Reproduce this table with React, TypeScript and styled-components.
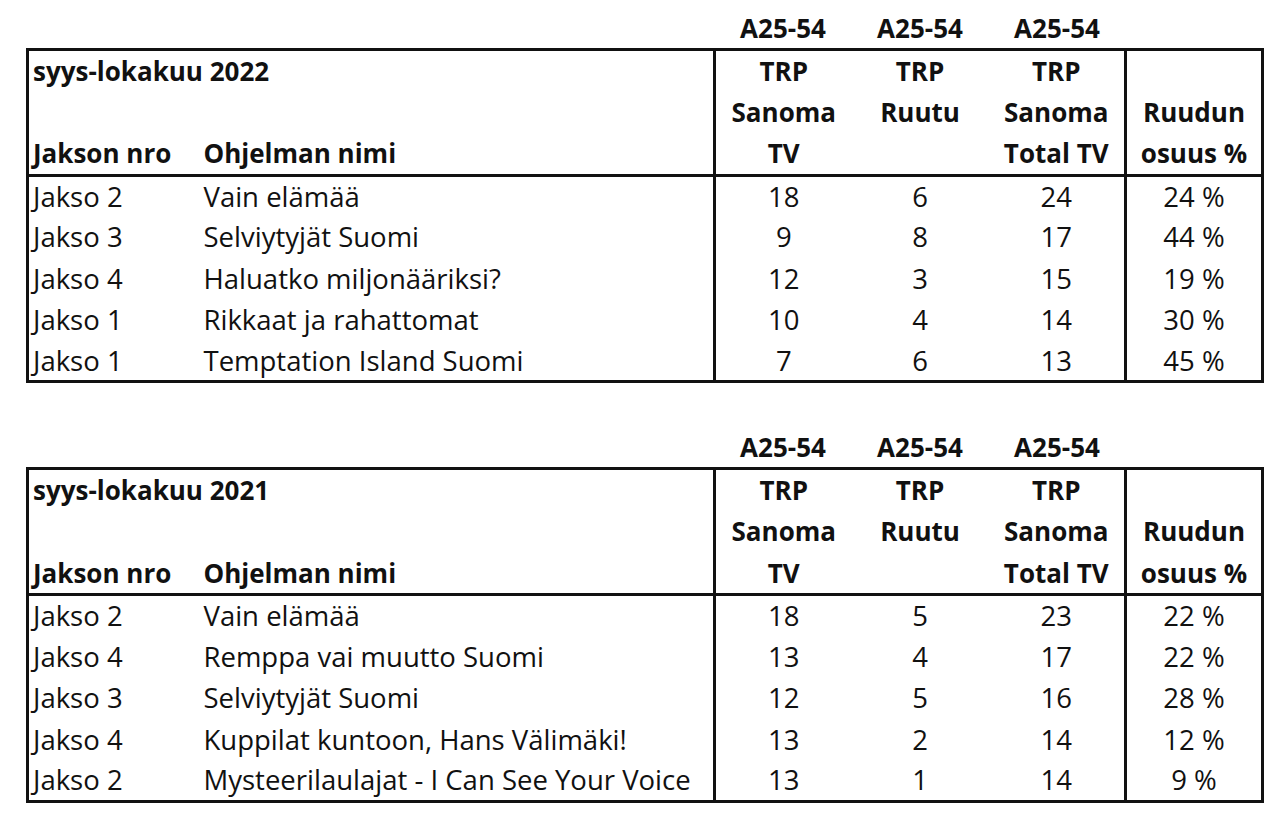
import styled, { createGlobalStyle } from "styled-components";

const GlobalStyle = createGlobalStyle`
  html, body {
    margin: 0;
    padding: 0;
    background: #ffffff;
  }
  body {
    font-family: "Open Sans", "Noto Sans", sans-serif;
    color: #111;
  }
`;

const Page = styled.div`
  display: flex;
  flex-direction: column;
  gap: 44px;
  padding: 8px 0 0 26px;
`;

const Sheet = styled.table`
  border-collapse: collapse;
  table-layout: fixed;
  width: 1235px;
  font-size: 27.5px;
`;

const LabelRow = styled.tr`
  height: 41px;
`;

const Label = styled.th`
  font-size: 26px;
  font-weight: 700;
  text-align: center;
  padding: 0;
  vertical-align: middle;
`;

const Block = styled.tbody`
  border: 3px solid #111;
`;

const HeadRow = styled.tr`
  height: 42px;
`;

const DataRow = styled.tr`
  height: 41.4px;
`;

const Cell = styled.td<{ $num?: boolean; $bold?: boolean; $sep?: boolean; $pad?: number }>`
  padding: 0 0 0 ${(p) => p.$pad ?? 0}px;
  line-height: 1;
  white-space: nowrap;
  overflow: visible;
  font-size: ${(p) => (p.$bold ? "26px" : "27.5px")};
  font-weight: ${(p) => (p.$bold ? 700 : 400)};
  text-align: ${(p) => (p.$num ? "center" : "left")};
  border-left: ${(p) => (p.$sep ? "3px solid #111" : "none")};
  vertical-align: middle;
`;

type Row = [string, string, number, number, number, string];

const tables: { period: string; rows: Row[] }[] = [
  {
    period: "syys-lokakuu 2022",
    rows: [
      ["Jakso 2", "Vain elämää", 18, 6, 24, "24 %"],
      ["Jakso 3", "Selviytyjät Suomi", 9, 8, 17, "44 %"],
      ["Jakso 4", "Haluatko miljonääriksi?", 12, 3, 15, "19 %"],
      ["Jakso 1", "Rikkaat ja rahattomat", 10, 4, 14, "30 %"],
      ["Jakso 1", "Temptation Island Suomi", 7, 6, 13, "45 %"],
    ],
  },
  {
    period: "syys-lokakuu 2021",
    rows: [
      ["Jakso 2", "Vain elämää", 18, 5, 23, "22 %"],
      ["Jakso 4", "Remppa vai muutto Suomi", 13, 4, 17, "22 %"],
      ["Jakso 3", "Selviytyjät Suomi", 12, 5, 16, "28 %"],
      ["Jakso 4", "Kuppilat kuntoon, Hans Välimäki!", 13, 2, 14, "12 %"],
      ["Jakso 2", "Mysteerilaulajat - I Can See Your Voice", 13, 1, 14, "9 %"],
    ],
  },
];

const RatingTable = ({ period, rows }: { period: string; rows: Row[] }) => (
  <Sheet>
    <colgroup>
      <col style={{ width: 171 }} />
      <col style={{ width: 516 }} />
      <col style={{ width: 137 }} />
      <col style={{ width: 137 }} />
      <col style={{ width: 137 }} />
      <col style={{ width: 137 }} />
    </colgroup>
    <thead>
      <LabelRow>
        <th />
        <th />
        <Label>A25-54</Label>
        <Label>A25-54</Label>
        <Label>A25-54</Label>
        <th />
      </LabelRow>
    </thead>
    <Block>
      <HeadRow>
        <Cell $bold $pad={4}>{period}</Cell>
        <Cell />
        <Cell $bold $num $sep>TRP</Cell>
        <Cell $bold $num>TRP</Cell>
        <Cell $bold $num>TRP</Cell>
        <Cell $sep />
      </HeadRow>
      <HeadRow>
        <Cell />
        <Cell />
        <Cell $bold $num $sep>Sanoma</Cell>
        <Cell $bold $num>Ruutu</Cell>
        <Cell $bold $num>Sanoma</Cell>
        <Cell $bold $num $sep>Ruudun</Cell>
      </HeadRow>
      <HeadRow>
        <Cell $bold $pad={4}>Jakson nro</Cell>
        <Cell $bold $pad={5}>Ohjelman nimi</Cell>
        <Cell $bold $num $sep>TV</Cell>
        <Cell />
        <Cell $bold $num>Total TV</Cell>
        <Cell $bold $num $sep>osuus %</Cell>
      </HeadRow>
    </Block>
    <Block>
      {rows.map((r, i) => (
        <DataRow key={i}>
          <Cell $pad={4}>{r[0]}</Cell>
          <Cell $pad={5}>{r[1]}</Cell>
          <Cell $num $sep>{r[2]}</Cell>
          <Cell $num>{r[3]}</Cell>
          <Cell $num>{r[4]}</Cell>
          <Cell $num $sep>{r[5]}</Cell>
        </DataRow>
      ))}
    </Block>
  </Sheet>
);

export default function App() {
  return (
    <>
      <GlobalStyle />
      <Page>
        {tables.map((t) => (
          <RatingTable key={t.period} period={t.period} rows={t.rows} />
        ))}
      </Page>
    </>
  );
}
